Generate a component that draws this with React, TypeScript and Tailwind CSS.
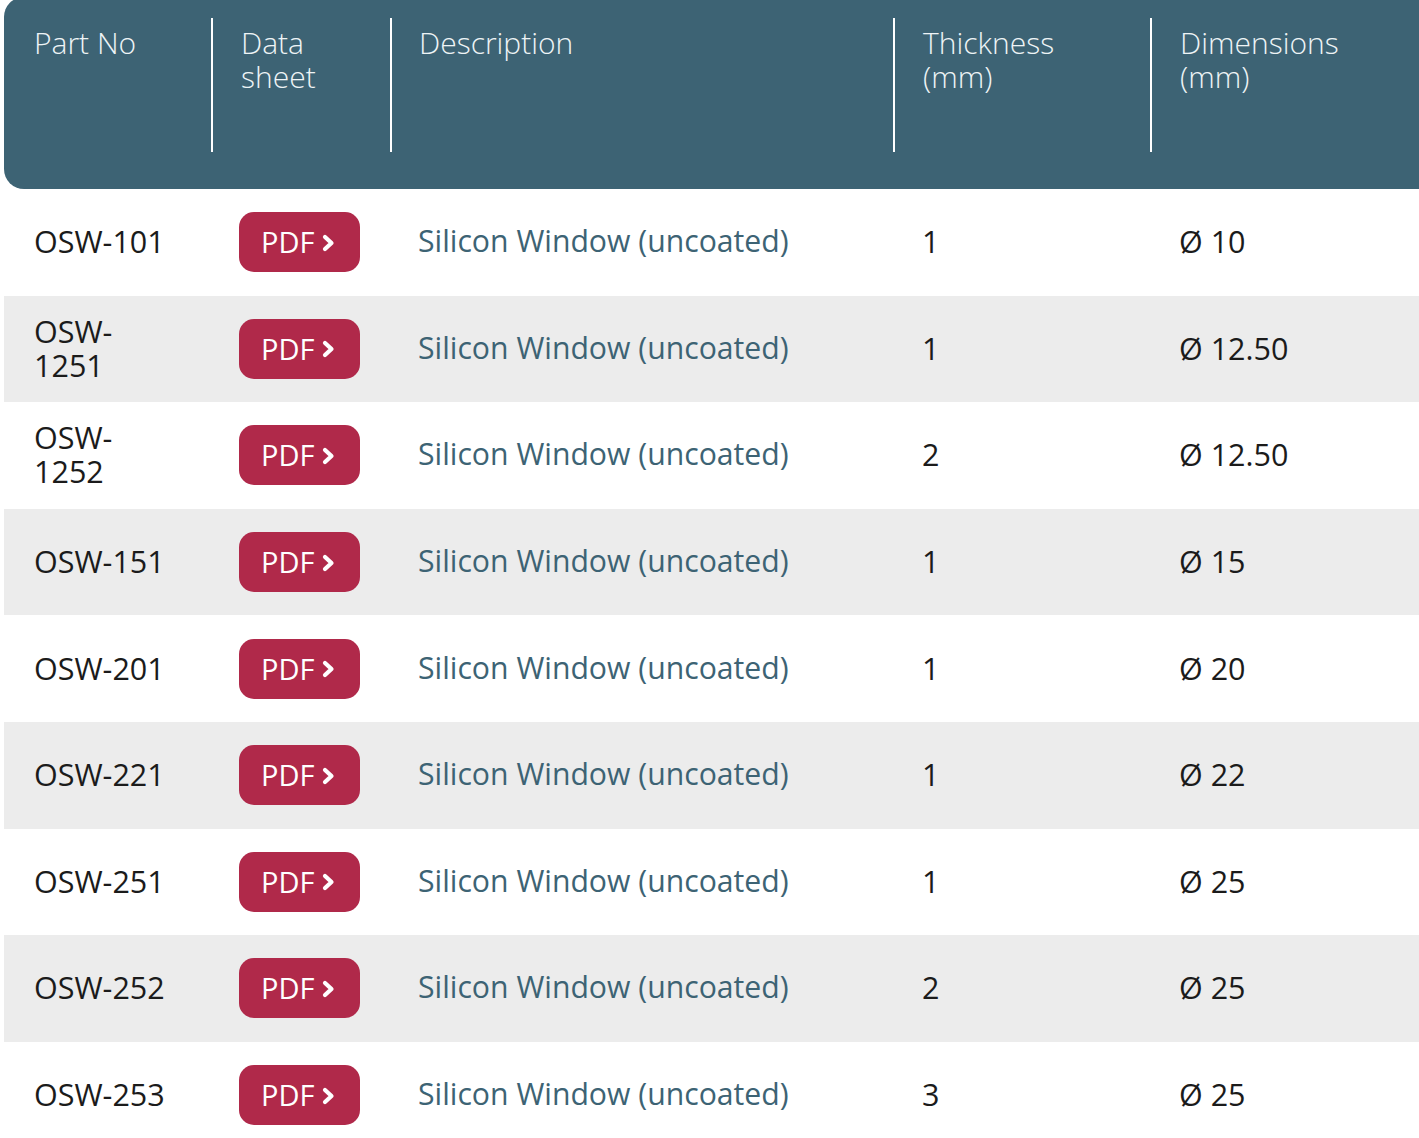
const rows = [
  { part: "OSW-101", thick: "1", dim: "Ø 10" },
  { part: "OSW-1251", thick: "1", dim: "Ø 12.50" },
  { part: "OSW-1252", thick: "2", dim: "Ø 12.50" },
  { part: "OSW-151", thick: "1", dim: "Ø 15" },
  { part: "OSW-201", thick: "1", dim: "Ø 20" },
  { part: "OSW-221", thick: "1", dim: "Ø 22" },
  { part: "OSW-251", thick: "1", dim: "Ø 25" },
  { part: "OSW-252", thick: "2", dim: "Ø 25" },
  { part: "OSW-253", thick: "3", dim: "Ø 25" },
];

const cols = "grid grid-cols-[207px_179px_503px_257px_1fr]";

function Chevron() {
  return (
    <svg width="16" height="20" viewBox="0 0 16 20" className="ml-[6px] mt-[1px]">
      <polyline points="5,4 11.5,10 5,16" fill="none" stroke="white" strokeWidth="4.2" strokeLinecap="round" strokeLinejoin="round" />
    </svg>
  );
}

export default function App() {
  return (
    <div className="w-[1419px] h-[1138px] overflow-hidden bg-white pl-[4px] font-['Open_Sans',sans-serif]">
      {/* header */}
      <div className={`${cols} -mt-[3px] h-[192px] rounded-l-[20px] bg-[#3d6374] text-[30px] leading-[34px] font-light text-[#eef4f6]`}>
        <div className="pl-[30px] pt-[29px]">Part No</div>
        <div className="mt-[21px] h-[134px] border-l-2 border-white pl-[28px] pt-[8px]">
          Data
          <br />
          sheet
        </div>
        <div className="mt-[21px] h-[134px] border-l-2 border-white pl-[27px] pt-[8px]">Description</div>
        <div className="mt-[21px] h-[134px] border-l-2 border-white pl-[28px] pt-[8px]">
          Thickness
          <br />
          (mm)
        </div>
        <div className="mt-[21px] h-[134px] border-l-2 border-white pl-[28px] pt-[8px]">
          Dimensions
          <br />
          (mm)
        </div>
      </div>

      {/* body */}
      {rows.map((r, i) => (
        <div
          key={r.part}
          className={`${cols} h-[106.6px] items-center text-[30.5px] leading-[34px] text-[#1b1b1b] ${i % 2 === 1 ? "bg-[#ececec]" : "bg-white"}`}
        >
          <div className="pl-[30px] pr-[40px] -mt-[2px]">{r.part}</div>
          <div className="pl-[28px]">
            <button className="flex h-[60px] w-[121px] items-center rounded-[15px] bg-[#b0294a] pl-[22px] text-[29px] text-white">
              PDF
              <Chevron />
            </button>
          </div>
          <div className="pl-[28px] -mt-[2px] text-[30.2px] text-[#3d6374]">Silicon Window (uncoated)</div>
          <div className="pl-[29px] -mt-[2px]">{r.thick}</div>
          <div className="pl-[29px] -mt-[2px]">{r.dim}</div>
        </div>
      ))}
    </div>
  );
}
